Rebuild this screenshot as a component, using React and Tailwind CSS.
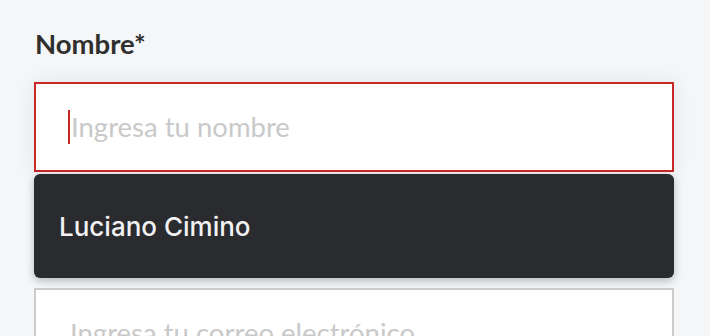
export default function App() {
  return (
    <div className="min-h-screen bg-[#f5f6f8] pl-[34px] pr-[36px] pt-[27px] overflow-hidden h-[336px]">
      <label className="block text-[27.5px] font-bold text-[#2f2f2f] leading-[34px] pl-px" style={{ fontFamily: 'Lato, "Noto Sans", sans-serif' }}>
        Nombre*
      </label>
      <div className="mt-[21px] relative">
        <div className="h-[90px] bg-white border-2 border-[#c62828] shadow-[0_0_18px_rgba(0,0,0,0.08)] flex items-center pl-[32px]">
          <span className="w-[2px] h-[34px] bg-[#c62828]" />
          <span className="text-[27.5px] text-[#c9c9c9] ml-px" style={{ fontFamily: 'Lato, "Noto Sans", sans-serif' }}>
            Ingresa tu nombre
          </span>
        </div>
        <div className="mt-[2px] h-[104px] rounded-[6px] bg-[#2a2b2f] shadow-[0_3px_8px_rgba(0,0,0,0.25)] flex items-center pl-[25px] relative z-10">
          <span className="text-[26px] font-medium text-[#f2f2f2]" style={{ fontFamily: 'Inter, "Noto Sans", sans-serif' }}>
            Luciano Cimino
          </span>
        </div>
        <div className="mt-[10px] h-[90px] bg-white border-2 border-[#cccccc] flex items-center pl-[34px]">
          <span className="text-[27.5px] text-[#c9c9c9] whitespace-nowrap" style={{ fontFamily: 'Lato, "Noto Sans", sans-serif' }}>
            Ingresa tu correo electrónico
          </span>
        </div>
      </div>
    </div>
  );
}
